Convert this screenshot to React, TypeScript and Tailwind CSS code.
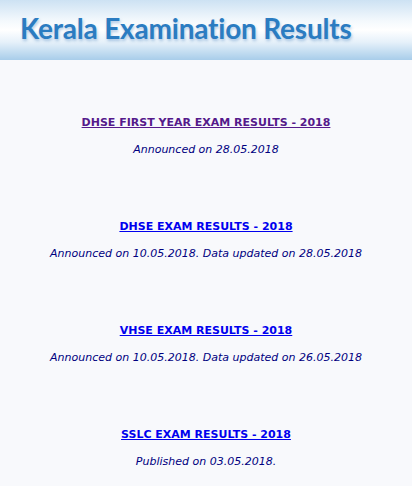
const results = [
  { title: 'DHSE FIRST YEAR EXAM RESULTS - 2018', note: 'Announced on 28.05.2018', visited: true },
  { title: 'DHSE EXAM RESULTS - 2018', note: 'Announced on 10.05.2018. Data updated on 28.05.2018' },
  { title: 'VHSE EXAM RESULTS - 2018', note: 'Announced on 10.05.2018. Data updated on 26.05.2018' },
  { title: 'SSLC EXAM RESULTS - 2018', note: 'Published on 03.05.2018.' },
];

export default function App() {
  return (
    <div className="h-[486px] overflow-hidden bg-[#f8f9fc] font-['Verdana','DejaVu_Sans',sans-serif]">
      {/* Banner */}
      <div className="h-[60px] bg-[linear-gradient(to_bottom,#cde2f3_0%,#f4f9fd_35%,#ffffff_50%,#e6f1fa_70%,#a8cdea_100%)] flex items-center pl-[20px] pb-[4px]">
        <h1 className="font-['Lato',sans-serif] font-bold text-[28px] leading-none text-[#2b7cc1] tracking-[-0.2px] [text-shadow:1px_2px_3px_rgba(40,110,180,0.35)]">
          Kerala Examination Results
        </h1>
      </div>

      {/* Result links */}
      <div className="flex flex-col items-center pt-[56px]">
        {results.map((r) => (
          <div key={r.title} className="flex flex-col items-center h-[104px]">
            <a
              href="#"
              className={`text-[11px] font-bold underline leading-[14px] ${r.visited ? 'text-[#551a8b]' : 'text-[#0000ee]'}`}
            >
              {r.title}
            </a>
            <p className="mt-[13px] text-[11px] italic text-[#000080] leading-[14px]">{r.note}</p>
          </div>
        ))}
      </div>
    </div>
  );
}
